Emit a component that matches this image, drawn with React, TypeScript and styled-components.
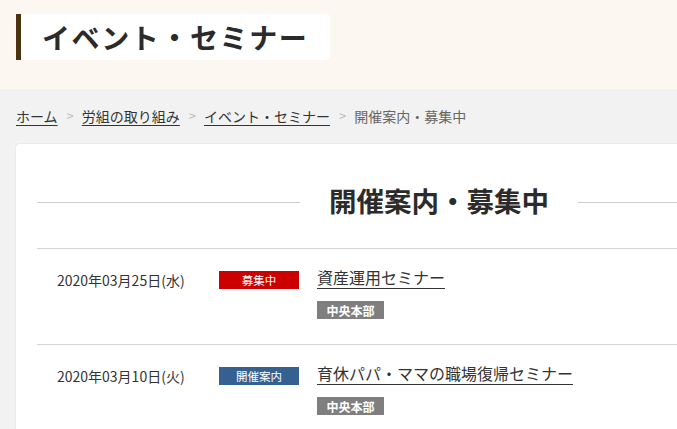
import React from 'react';
import styled, { createGlobalStyle } from 'styled-components';

const GlobalStyle = createGlobalStyle`
  html, body {
    margin: 0;
    padding: 0;
    background: #f2f2f2;
    overflow: hidden;
  }
  body {
    font-family: "Noto Sans CJK JP", "Noto Sans", sans-serif;
    color: #333333;
  }
`;

/* ページ上部 タイトル帯 */
const PageHeader = styled.header`
  background: #fcf7f0;
  height: 89px;
  padding: 14px 0 0 16px;
  box-sizing: border-box;
`;

const PageTitle = styled.h1`
  display: inline-flex;
  align-items: center;
  height: 46px;
  margin: 0;
  padding: 0 22px 0 21px;
  box-sizing: border-box;
  background: #ffffff;
  border-left: 5px solid #4b3312;
  border-radius: 0 4px 4px 0;
  font-size: 28px;
  font-weight: 700;
  letter-spacing: 1.6px;
  color: #2b2b2b;
`;

/* パンくず */
const Breadcrumb = styled.nav`
  display: flex;
  align-items: center;
  padding: 17px 0 0 16px;
  height: 20px;
  font-size: 14px;
  line-height: 20px;
  white-space: nowrap;
`;

const Crumb = styled.a<{ $current?: boolean }>`
  color: ${(p) => (p.$current ? '#666666' : '#333333')};
  text-decoration: ${(p) => (p.$current ? 'none' : 'underline')};
  text-underline-offset: 3px;
`;

const Sep = styled.span`
  color: #bbbbbb;
  margin: 0 8px 0 9px;
  font-size: 13px;
`;

/* 本文カード */
const Card = styled.main`
  width: 846px;
  margin: 18px 0 0 16px;
  padding: 0 21px;
  box-sizing: border-box;
  background: #ffffff;
  border-radius: 4px;
  box-shadow: 0 0 0 1px #ebebeb;
  min-height: 300px;
`;

const SectionTitle = styled.div`
  display: flex;
  align-items: center;
  gap: 29px;
  padding-top: 36px;
  padding-bottom: 28px;
  border-bottom: 1px solid #d4d4d4;

  &::before,
  &::after {
    content: '';
    flex: 1;
    height: 1px;
    background: #cccccc;
    margin-top: 4px;
  }
`;

const SectionText = styled.h2`
  margin: 0;
  font-size: 27.5px;
  font-weight: 700;
  line-height: 40px;
  color: #2b2b2b;
`;

const EventRow = styled.div`
  display: flex;
  align-items: flex-start;
  padding: 22px 0 22px 20px;
  border-bottom: 1px solid #d4d4d4;
  height: 51px;
`;

const DateCell = styled.div`
  width: 162px;
  font-size: 14px;
  line-height: 18px;
  color: #333333;
`;

const StatusBadge = styled.span<{ $color: string }>`
  display: inline-flex;
  align-items: center;
  justify-content: center;
  width: 80px;
  height: 18px;
  background: ${(p) => p.$color};
  color: #ffffff;
  font-size: 11.5px;
  flex-shrink: 0;
`;

const Body = styled.div`
  margin-left: 18px;
  display: flex;
  flex-direction: column;
  align-items: flex-start;
  gap: 15px;
`;

const EventLink = styled.a`
  font-size: 16px;
  line-height: 18px;
  color: #333333;
  text-decoration: underline;
  text-underline-offset: 4px;
  margin-top: -3px;
`;

const Tag = styled.span`
  display: inline-flex;
  align-items: center;
  justify-content: center;
  width: 67px;
  height: 18px;
  background: #7f7f7f;
  color: #ffffff;
  font-size: 12px;
  font-weight: 700;
`;

const events = [
  {
    date: '2020年03月25日(水)',
    status: '募集中',
    color: '#cc0000',
    title: '資産運用セミナー',
    tag: '中央本部',
  },
  {
    date: '2020年03月10日(火)',
    status: '開催案内',
    color: '#346190',
    title: '育休パパ・ママの職場復帰セミナー',
    tag: '中央本部',
  },
];

const App = (): JSX.Element => (
  <>
    <GlobalStyle />
    <PageHeader>
      <PageTitle>イベント・セミナー</PageTitle>
    </PageHeader>
    <Breadcrumb>
      <Crumb href="#">ホーム</Crumb>
      <Sep>&gt;</Sep>
      <Crumb href="#">労組の取り組み</Crumb>
      <Sep>&gt;</Sep>
      <Crumb href="#">イベント・セミナー</Crumb>
      <Sep>&gt;</Sep>
      <Crumb $current>開催案内・募集中</Crumb>
    </Breadcrumb>
    <Card>
      <SectionTitle>
        <SectionText>開催案内・募集中</SectionText>
      </SectionTitle>
      {events.map((ev) => (
        <EventRow key={ev.date}>
          <DateCell>{ev.date}</DateCell>
          <StatusBadge $color={ev.color}>{ev.status}</StatusBadge>
          <Body>
            <EventLink href="#">{ev.title}</EventLink>
            <Tag>{ev.tag}</Tag>
          </Body>
        </EventRow>
      ))}
    </Card>
  </>
);

export default App;
